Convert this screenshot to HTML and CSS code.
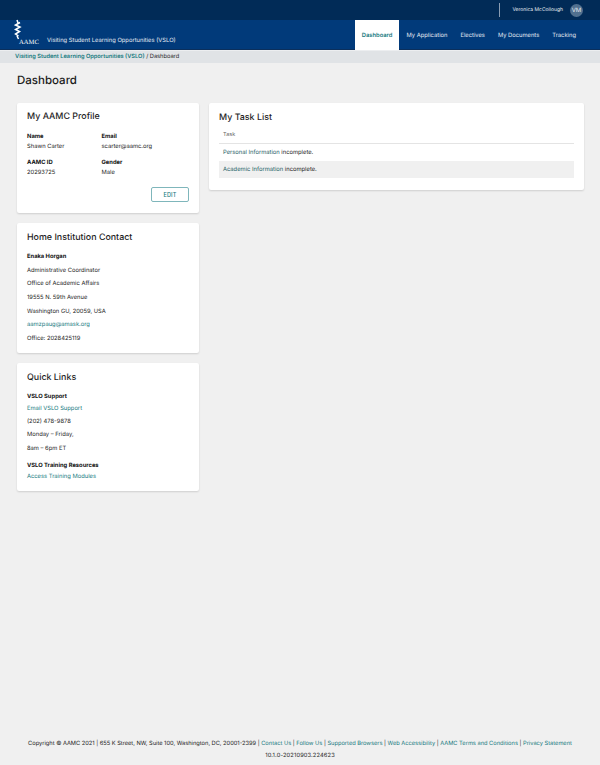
FILE: index.html
```html
<!DOCTYPE html>
<html lang="en">
<head>
<meta charset="utf-8">
<title>VSLO Dashboard</title>
<link rel="stylesheet" href="styles.css">
</head>
<body>
<div class="page">
  <div class="topbar">
    <div class="divider"></div>
    <span class="username">Veronica McCollough</span>
    <span class="avatar">VM</span>
  </div>
  <header class="mainbar">
    <div class="brand">
      <svg class="logo" width="28" height="26" viewBox="0 0 28 26" aria-hidden="true">
        <path d="M3 1 L4 4 M6 3.5 L1.5 6 L6 8 L1.5 10.5 L5.5 12.5 L1.5 15 L4.5 17 M3 17 L4.5 20" fill="none" stroke="#fff" stroke-width="1.5"/>
        <text x="5" y="24.5" class="logotext">AAMC</text>
      </svg>
      <span class="apptitle">Visiting Student Learning Opportunities (VSLO)</span>
    </div>
    <nav class="nav">
      <a class="navitem active">Dashboard</a>
      <a class="navitem">My Application</a>
      <a class="navitem">Electives</a>
      <a class="navitem">My Documents</a>
      <a class="navitem">Tracking</a>
    </nav>
  </header>
  <div class="crumbs"><a class="crumblink">Visiting Student Learning Opportunities (VSLO)</a> / Dashboard</div>
  <main class="content">
    <h1 class="pagetitle">Dashboard</h1>
    <div class="columns">
      <div class="leftcol">
        <section class="card profile">
          <h2 class="cardtitle">My AAMC Profile</h2>
          <div class="fields">
            <div class="field"><div class="label">Name</div><div class="value">Shawn Carter</div></div>
            <div class="field"><div class="label">Email</div><div class="value">scarter@aamc.org</div></div>
            <div class="field"><div class="label">AAMC ID</div><div class="value">20293725</div></div>
            <div class="field"><div class="label">Gender</div><div class="value">Male</div></div>
          </div>
          <div class="actions"><button class="editbtn">EDIT</button></div>
        </section>
        <section class="card contact">
          <h2 class="cardtitle">Home Institution Contact</h2>
          <p class="line strong">Enaka Horgan</p>
          <p class="line">Administrative Coordinator</p>
          <p class="line">Office of Academic Affairs</p>
          <p class="line">19555 N. 59th Avenue</p>
          <p class="line">Washington GU, 20059, USA</p>
          <p class="line"><a class="link">aamzpaug@amask.org</a></p>
          <p class="line">Office: 2028425119</p>
        </section>
        <section class="card quick">
          <h2 class="cardtitle">Quick Links</h2>
          <p class="qhead">VSLO Support</p>
          <p class="qlink"><a class="link">Email VSLO Support</a></p>
          <p class="line">(202) 478-9878</p>
          <p class="line">Monday – Friday,</p>
          <p class="line">8am – 6pm ET</p>
          <p class="qhead second">VSLO Training Resources</p>
          <p class="qlink"><a class="link">Access Training Modules</a></p>
        </section>
      </div>
      <section class="card tasks">
        <h2 class="cardtitle">My Task List</h2>
        <div class="taskhead">Task</div>
        <div class="taskrow"><a class="tasklink">Personal Information</a> incomplete.</div>
        <div class="taskrow alt"><a class="tasklink">Academic Information</a> incomplete.</div>
      </section>
    </div>
  </main>
  <footer class="footer">
    <div class="copy">Copyright © AAMC 2021 | 655 K Street, NW, Suite 100, Washington, DC, 20001-2399 | <a class="link">Contact Us</a> | <a class="link">Follow Us</a> | <a class="link">Supported Browsers</a> | <a class="link">Web Accessibility</a> | <a class="link">AAMC Terms and Conditions</a> | <a class="link">Privacy Statement</a></div>
    <div class="version">10.1.0-20210903.224623</div>
  </footer>
</div>
</body>
</html>
```
FILE: styles.css
```css
* { box-sizing: border-box; }
html, body { margin: 0; padding: 0; }
body {
  background: #f0f0f0;
  color: #1a1a1a;
  font-family: "Inter", "Liberation Sans", sans-serif;
  font-size: 6.5px;
  text-rendering: geometricPrecision;
}
.page { height: 765px; display: flex; flex-direction: column; }
.topbar {
  height: 20px; background: #012b57; color: #fff;
  display: flex; align-items: center; justify-content: flex-end;
  padding-right: 17px;
}
.divider { width: 1px; height: 14px; background: #8a9db3; margin-right: 12px; }
.username { font-size: 5px; margin-right: 7px; color: #e8edf3; }
.avatar {
  width: 13px; height: 13px; border-radius: 50%; background: #51708f; color: #e8edf3;
  font-size: 6px; display: flex; align-items: center; justify-content: center;
}
.mainbar {
  height: 30px; background: #013a7a; border-bottom: 1px solid #0b2f5c;
  display: flex; justify-content: space-between; color: #fff;
}
.brand { display: flex; align-items: flex-end; padding: 0 0 4px 14px; }
.logo { display: block; flex: none; }
.logotext { font-family: "Liberation Serif", serif; font-size: 6.6px; fill: #fff; }
.apptitle { font-size: 5.8px; margin-left: 5px; margin-bottom: 1px; color: #e6ecf4; }
.nav { display: flex; padding-right: 17.5px; }
.navitem {
  display: flex; align-items: center; padding: 0 6.5px; font-size: 5.8px; color: #e6ecf4; height: 30px;
}
.navitem.active {
  background: #fff; color: #177a80; font-weight: 600; padding: 0; width: 44px; margin-right: 1px; justify-content: center;
}
.crumbs {
  height: 13px; background: #e0e3e6; border-top: 1px solid #eceef0; padding-left: 15px; font-size: 5.7px; line-height: 12px; color: #222;
}
.crumblink { color: #177a80; font-weight: 600; }
.content { flex: 1; padding: 0 16px 0 17px; }
.pagetitle { margin: 10px 0 0; font-size: 11.5px; line-height: 15px; font-weight: 500; color: #1c1c1c; }
.columns { display: flex; gap: 10px; margin-top: 15px; align-items: flex-start; }
.leftcol { width: 182px; flex: none; display: flex; flex-direction: column; gap: 10px; }
.card {
  background: #fff; border-radius: 2px; box-shadow: 0 1px 2px rgba(0,0,0,.14); padding: 8px 10px;
}
.cardtitle { margin: 0; font-size: 8.9px; line-height: 12px; font-weight: 500; color: #1f1f1f; }
.profile { height: 110px; }
.fields { display: grid; grid-template-columns: 74.5px 1fr; row-gap: 8.5px; margin-top: 9.5px; }
.label { font-size: 5.8px; font-weight: 700; line-height: 7px; color: #111; }
.value { font-size: 5.8px; line-height: 7px; margin-top: 3.5px; color: #222; }
.actions { display: flex; justify-content: flex-end; margin-top: 11px; }
.editbtn {
  width: 38px; height: 15px; margin: 0; padding: 0; background: #fff; border: 1px solid #7fb6bb; border-radius: 2px;
  color: #177a80; font-family: inherit; font-size: 5.5px; letter-spacing: .2px; font-weight: 500;
}
.contact { height: 130px; padding-top: 8.5px; }
.contact .cardtitle { margin-bottom: 9.5px; }
.line { margin: 0 0 6.7px; font-size: 5.8px; line-height: 7px; color: #222; }
.line.strong { font-weight: 700; color: #111; }
.link { color: #177a80; }
.quick { height: 127.5px; padding-top: 9px; }
.qhead { margin: 9px 0 4.5px; font-size: 5.8px; font-weight: 700; line-height: 7px; color: #111; }
.qhead.second { margin-top: 10px; }
.qlink { margin: 0 0 6px; font-size: 5.8px; line-height: 7px; }
.tasks { flex: 1; height: 87px; padding: 9px 10px; }
.taskhead { margin-top: 5px; height: 14.5px; padding-left: 4px; font-size: 5.5px; line-height: 13px; color: #666; border-bottom: 1px solid #e4e4e4; }
.taskrow { height: 17px; padding-left: 4px; font-size: 5.8px; line-height: 17px; color: #222; }
.taskrow.alt { background: #f0f0f0; }
.tasklink { color: #1d5e66; }
.footer { text-align: center; font-size: 5.7px; line-height: 7px; padding-bottom: 6.5px; color: #222; }
.copy { white-space: nowrap; }
.version { margin-top: 5px; letter-spacing: .15px; }
```
